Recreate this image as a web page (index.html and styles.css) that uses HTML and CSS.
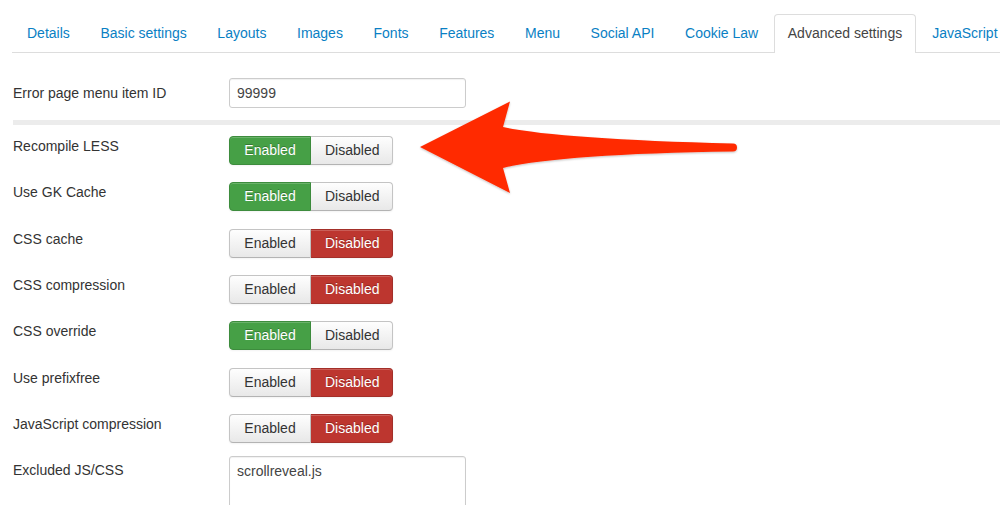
FILE: index.html
```html
<!DOCTYPE html>
<html>
<head>
<meta charset="utf-8">
<link rel="stylesheet" href="styles.css">
</head>
<body>
<div class="page">
  <ul class="tabs">
    <li class="tab">Details</li>
    <li class="tab">Basic settings</li>
    <li class="tab">Layouts</li>
    <li class="tab">Images</li>
    <li class="tab">Fonts</li>
    <li class="tab">Features</li>
    <li class="tab">Menu</li>
    <li class="tab">Social API</li>
    <li class="tab">Cookie Law</li>
    <li class="tab active">Advanced settings</li>
    <li class="tab">JavaScript</li>
  </ul>

  <div class="form">
    <div class="row first">
      <div class="label mid">Error page menu item ID</div>
      <div class="input">99999</div>
    </div>
    <div class="sep"></div>

    <div class="row">
      <div class="label">Recompile LESS</div>
      <div class="btn-group"><span class="btn on">Enabled</span><span class="btn">Disabled</span></div>
    </div>
    <div class="row">
      <div class="label">Use GK Cache</div>
      <div class="btn-group"><span class="btn on">Enabled</span><span class="btn">Disabled</span></div>
    </div>
    <div class="row">
      <div class="label">CSS cache</div>
      <div class="btn-group"><span class="btn">Enabled</span><span class="btn off">Disabled</span></div>
    </div>
    <div class="row">
      <div class="label">CSS compression</div>
      <div class="btn-group"><span class="btn">Enabled</span><span class="btn off">Disabled</span></div>
    </div>
    <div class="row">
      <div class="label">CSS override</div>
      <div class="btn-group"><span class="btn on">Enabled</span><span class="btn">Disabled</span></div>
    </div>
    <div class="row">
      <div class="label">Use prefixfree</div>
      <div class="btn-group"><span class="btn">Enabled</span><span class="btn off">Disabled</span></div>
    </div>
    <div class="row">
      <div class="label">JavaScript compression</div>
      <div class="btn-group"><span class="btn">Enabled</span><span class="btn off">Disabled</span></div>
    </div>
    <div class="row last">
      <div class="label">Excluded JS/CSS</div>
      <div class="textarea">scrollreveal.js</div>
    </div>
  </div>

  <svg class="arrow" width="1000" height="505" viewBox="0 0 1000 505">
    <defs>
      <filter id="sh" x="-5%" y="-20%" width="110%" height="140%">
        <feGaussianBlur in="SourceAlpha" stdDeviation="1"/>
        <feOffset dx="0" dy="1"/>
        <feComponentTransfer><feFuncA type="linear" slope="0.25"/></feComponentTransfer>
        <feMerge><feMergeNode/><feMergeNode in="SourceGraphic"/></feMerge>
      </filter>
    </defs>
    <path filter="url(#sh)" fill="#ff2a00" d="M420,147 L510,101.5 L503,127 Q560,139 733,143.5 A4,4 0 0 1 733,151.5 Q560,154 503,168 L510,193 Z"/>
  </svg>
</div>
</body>
</html>
```

FILE: styles.css
```css
html, body {
  margin: 0;
  padding: 0;
  background: #fff;
}
body {
  font-family: "Liberation Sans", Arial, Helvetica, sans-serif;
  font-size: 14px;
  color: #333;
  width: 1000px;
  height: 505px;
  overflow: hidden;
}
.page {
  position: relative;
  width: 1000px;
  height: 505px;
  overflow: hidden;
}
.tabs {
  list-style: none;
  margin: 0 0 0 12px;
  padding: 14px 0 0 0;
  display: flex;
  border-bottom: 1px solid #ddd;
  white-space: nowrap;
}
.tab {
  height: 37px;
  line-height: 37px;
  padding: 0 13.6px 0 14px;
  margin-right: 1px;
  color: #0a7fc4;
  font-size: 14px;
  border: 1px solid transparent;
  border-bottom: none;
  border-radius: 4px 4px 0 0;
  margin-bottom: -1px;
  flex-shrink: 0;
}
.tab.active {
  color: #444;
  background: #fff;
  border-color: #ddd;
  height: 38px;
  padding: 0 13px 0 13px;
}
.form {
  padding: 25px 0 0 0;
}
.row {
  display: flex;
  align-items: flex-start;
  margin-bottom: 17.33px;
}
.row.first {
  margin-bottom: 12px;
  align-items: center;
}
.label {
  width: 216px;
  padding-left: 13px;
  line-height: 20px;
  font-size: 14px;
  color: #333;
  flex-shrink: 0;
}
.input {
  box-sizing: border-box;
  width: 237px;
  height: 30px;
  border: 1px solid #ccc;
  border-radius: 3px;
  padding: 0 7px;
  line-height: 28px;
  font-size: 14px;
  color: #444;
  box-shadow: inset 0 1px 1px rgba(0,0,0,0.06);
}
.sep {
  margin-left: 13px;
  height: 5px;
  background: #ececec;
  margin-bottom: 11px;
}
.btn-group {
  display: flex;
  height: 29px;
}
.btn {
  box-sizing: border-box;
  height: 29px;
  line-height: 27px;
  padding: 0 14px;
  font-size: 14px;
  color: #333;
  border: 1px solid #c4c4c4;
  border-bottom-color: #b3b3b3;
  background: linear-gradient(#fefefe, #e8e8e8);
  box-shadow: inset 0 1px 0 rgba(255,255,255,0.2), 0 1px 2px rgba(0,0,0,0.05);
}
.btn:first-child {
  border-radius: 4px 0 0 4px;
  width: 82px;
  text-align: center;
}
.btn:last-child {
  border-radius: 0 4px 4px 0;
  border-left: none;
  width: 82px;
  text-align: center;
}
.btn.on {
  background: #46a046;
  border-color: #3d8c3d;
  color: #fff;
  text-shadow: 0 -1px 0 rgba(0,0,0,0.25);
}
.btn.off {
  background: #bd362f;
  border-color: #a32f29;
  color: #fff;
  text-shadow: 0 -1px 0 rgba(0,0,0,0.25);
}
.row.last .textarea {
  margin-top: -4px;
}
.textarea {
  box-sizing: border-box;
  width: 237px;
  height: 80px;
  border: 1px solid #ccc;
  border-radius: 3px;
  padding: 4px 7px;
  line-height: 20px;
  font-size: 14px;
  color: #444;
  box-shadow: inset 0 1px 1px rgba(0,0,0,0.06);
}
.arrow {
  position: absolute;
  left: 0;
  top: 0;
  pointer-events: none;
}
```
